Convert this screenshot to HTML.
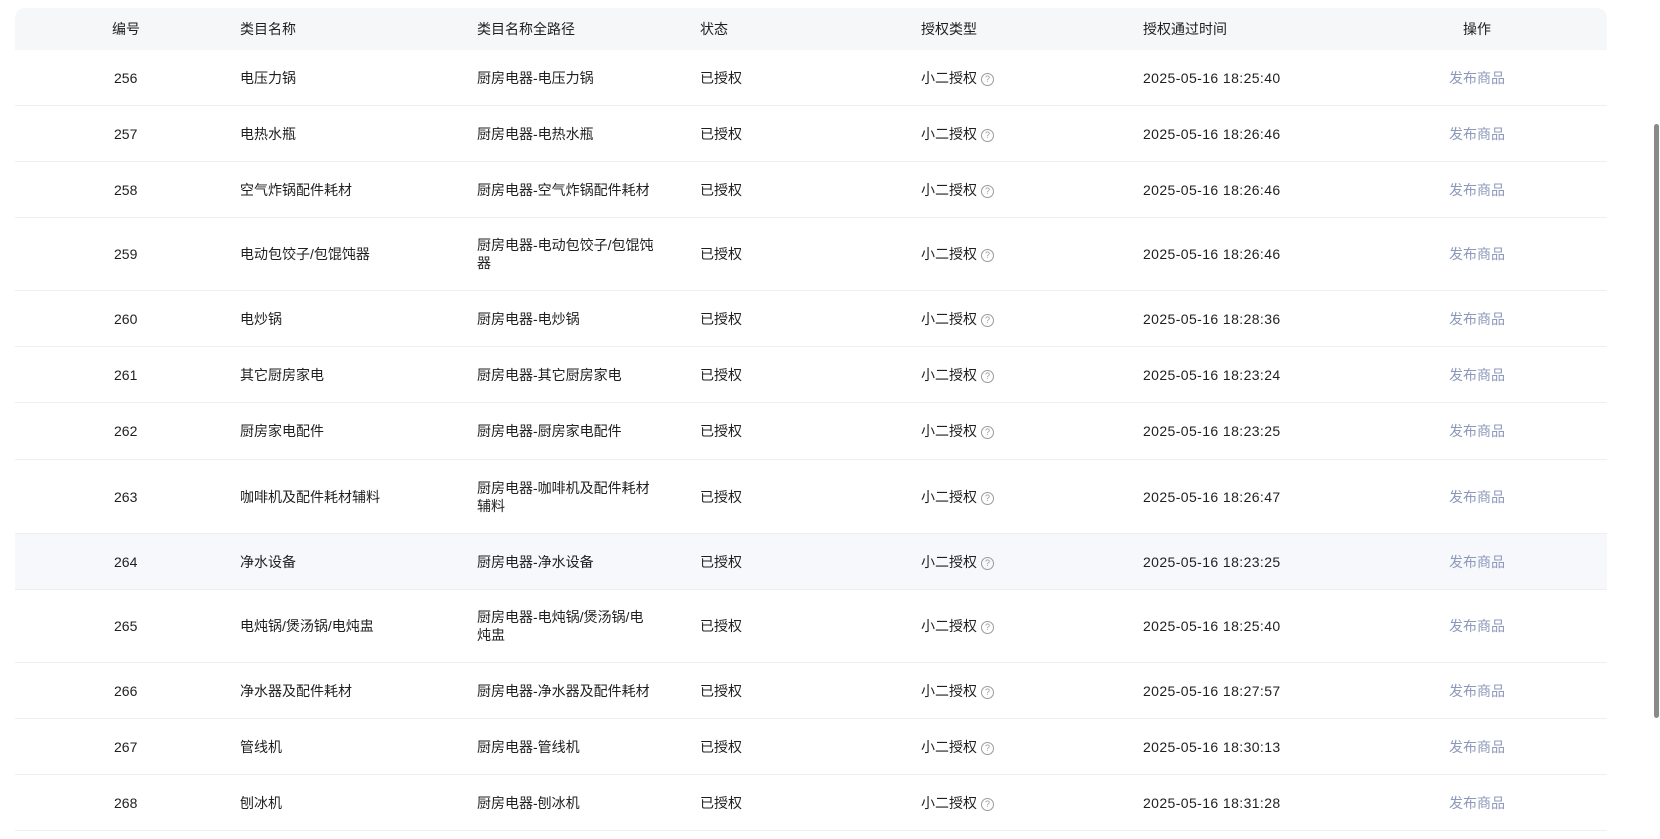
<!DOCTYPE html>
<html><head><meta charset="utf-8"><style>
body{margin:0;width:1660px;height:839px;overflow:hidden;background:#fff;font-family:"Liberation Sans","Noto Sans CJK SC",sans-serif;font-size:14px;color:#1f1f1f;position:relative}
.hd{position:absolute;left:15px;top:8px;width:1592px;height:42px;background:#f6f7f9;border-radius:10px 10px 0 0}
.r{position:absolute;left:15px;width:1592px;border-bottom:1px solid #eeeff1}
.c{position:absolute;top:50%;transform:translateY(-50%);line-height:18px}
.q{display:inline-block;width:11px;height:11px;border:1px solid #9a9a9a;border-radius:50%;font-size:9px;line-height:11px;text-align:center;color:#9a9a9a;margin-left:4px;vertical-align:1px}
.a{color:#8d98bb}
.t{letter-spacing:0.4px}
.sb{position:absolute;left:1654px;top:124px;width:5px;height:594px;background:#8a8a8a;border-radius:3px}
</style></head><body>
<div class="hd">
<div class="c" style="left:97px">编号</div>
<div class="c" style="left:225px">类目名称</div>
<div class="c" style="left:462px">类目名称全路径</div>
<div class="c" style="left:685px">状态</div>
<div class="c" style="left:906px">授权类型</div>
<div class="c" style="left:1128px">授权通过时间</div>
<div class="c" style="left:1448px">操作</div>
</div>
<div id="rows"></div>
<div class="sb"></div>
<script>
var d=[["256","电压力锅","厨房电器-电压力锅","18:25:40",56],["257","电热水瓶","厨房电器-电热水瓶","18:26:46",56],["258","空气炸锅配件耗材","厨房电器-空气炸锅配件耗材","18:26:46",56],["259","电动包饺子/包馄饨器","厨房电器-电动包饺子/包馄饨<br>器","18:26:46",73],["260","电炒锅","厨房电器-电炒锅","18:28:36",56],["261","其它厨房家电","厨房电器-其它厨房家电","18:23:24",56],["262","厨房家电配件","厨房电器-厨房家电配件","18:23:25",57],["263","咖啡机及配件耗材辅料","厨房电器-咖啡机及配件耗材<br>辅料","18:26:47",74],["264","净水设备","厨房电器-净水设备","18:23:25",56],["265","电炖锅/煲汤锅/电炖盅","厨房电器-电炖锅/煲汤锅/电<br>炖盅","18:25:40",73],["266","净水器及配件耗材","厨房电器-净水器及配件耗材","18:27:57",56],["267","管线机","厨房电器-管线机","18:30:13",56],["268","刨冰机","厨房电器-刨冰机","18:31:28",56]];
var y=50,h="";
d.forEach(function(r){h+='<div class="r" style="top:'+y+'px;height:'+(r[4]-1)+'px'+(r[0]=="264"?';background:#f7f8fc':'')+'">'+
'<div class="c" style="left:99px">'+r[0]+'</div><div class="c" style="left:225px">'+r[1]+'</div><div class="c" style="left:462px">'+r[2]+'</div><div class="c" style="left:685px">已授权</div><div class="c" style="left:906px">小二授权<span class="q">?</span></div><div class="c t" style="left:1128px">2025-05-16 '+r[3]+'</div><div class="c a" style="left:1434px">发布商品</div></div>';y+=r[4];});
document.getElementById("rows").innerHTML=h;
</script>
</body></html>
